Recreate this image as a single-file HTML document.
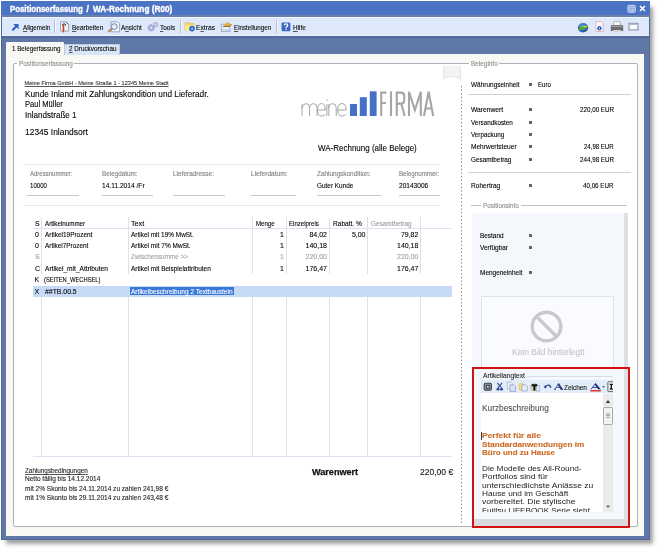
<!DOCTYPE html>
<html><head><meta charset="utf-8"><style>
html,body{margin:0;padding:0;background:#fff;width:658px;height:548px;overflow:hidden;position:relative;font-family:"Liberation Sans",sans-serif;}
u{text-decoration:underline;text-decoration-thickness:0.6px;text-underline-offset:1px;text-decoration-color:#555;}
</style></head><body>
<div style="position:absolute;left:1px;top:1px;width:649px;height:539px;background:#6078a8;box-shadow:4px 5px 4px -1px rgba(30,30,30,0.42);"></div><div style="position:absolute;left:1px;top:1px;width:649px;height:539px;box-sizing:border-box;border:1px solid #506896;"></div><div style="position:absolute;left:1px;top:1px;width:649px;height:15px;background:#4b73c4;"></div><div style="position:absolute;left:1px;top:15px;width:649px;height:2px;background:#6a80ae;"></div><div style="position:absolute;left:2px;top:17px;width:647px;height:19px;background:#dde9fa;border-top:1px solid #f0f6fe;border-bottom:1px solid #eef4fc;box-sizing:border-box;"></div><div style="position:absolute;left:2px;top:36px;width:647px;height:2px;background:#526a99;"></div><div style="position:absolute;left:6px;top:54px;width:638px;height:482px;background:#f9f8f4;"></div><div style="position:absolute;left:6px;top:42px;width:58px;height:13px;background:#f9f8f4;border-radius:1px 1px 0 0;"></div><div style="position:absolute;left:64px;top:44px;width:56px;height:11px;background:#d8e5f7;border:1px solid #b8c8e0;border-bottom:none;box-sizing:border-box;"></div><div style="position:absolute;left:13px;top:63px;width:625px;height:464px;background:#fff;box-sizing:border-box;border:1px solid #a9b1bb;border-radius:2px;"></div><div style="position:absolute;left:17px;top:63px;width:57px;height:2px;background:#fff;"></div><div style="position:absolute;left:469px;top:63px;width:30px;height:2px;background:#fff;"></div><svg style="position:absolute;left:460.5px;top:85px" width="2" height="442"><g fill="#808080"><rect x="0" y="1.0" width="1" height="1.3"/><rect x="0" y="4.6" width="1" height="1.3"/><rect x="0" y="8.2" width="1" height="1.3"/><rect x="0" y="11.8" width="1" height="1.3"/><rect x="0" y="15.4" width="1" height="1.3"/><rect x="0" y="19.0" width="1" height="1.3"/><rect x="0" y="22.6" width="1" height="1.3"/><rect x="0" y="26.2" width="1" height="1.3"/><rect x="0" y="29.8" width="1" height="1.3"/><rect x="0" y="33.4" width="1" height="1.3"/><rect x="0" y="37.0" width="1" height="1.3"/><rect x="0" y="40.6" width="1" height="1.3"/><rect x="0" y="44.2" width="1" height="1.3"/><rect x="0" y="47.8" width="1" height="1.3"/><rect x="0" y="51.4" width="1" height="1.3"/><rect x="0" y="55.0" width="1" height="1.3"/><rect x="0" y="58.6" width="1" height="1.3"/><rect x="0" y="62.2" width="1" height="1.3"/><rect x="0" y="65.8" width="1" height="1.3"/><rect x="0" y="69.4" width="1" height="1.3"/><rect x="0" y="73.0" width="1" height="1.3"/><rect x="0" y="76.6" width="1" height="1.3"/><rect x="0" y="80.2" width="1" height="1.3"/><rect x="0" y="83.8" width="1" height="1.3"/><rect x="0" y="87.4" width="1" height="1.3"/><rect x="0" y="91.0" width="1" height="1.3"/><rect x="0" y="94.6" width="1" height="1.3"/><rect x="0" y="98.2" width="1" height="1.3"/><rect x="0" y="101.8" width="1" height="1.3"/><rect x="0" y="105.4" width="1" height="1.3"/><rect x="0" y="109.0" width="1" height="1.3"/><rect x="0" y="112.6" width="1" height="1.3"/><rect x="0" y="116.2" width="1" height="1.3"/><rect x="0" y="119.8" width="1" height="1.3"/><rect x="0" y="123.4" width="1" height="1.3"/><rect x="0" y="127.0" width="1" height="1.3"/><rect x="0" y="130.6" width="1" height="1.3"/><rect x="0" y="134.2" width="1" height="1.3"/><rect x="0" y="137.8" width="1" height="1.3"/><rect x="0" y="141.4" width="1" height="1.3"/><rect x="0" y="145.0" width="1" height="1.3"/><rect x="0" y="148.6" width="1" height="1.3"/><rect x="0" y="152.2" width="1" height="1.3"/><rect x="0" y="155.8" width="1" height="1.3"/><rect x="0" y="159.4" width="1" height="1.3"/><rect x="0" y="163.0" width="1" height="1.3"/><rect x="0" y="166.6" width="1" height="1.3"/><rect x="0" y="170.2" width="1" height="1.3"/><rect x="0" y="173.8" width="1" height="1.3"/><rect x="0" y="177.4" width="1" height="1.3"/><rect x="0" y="181.0" width="1" height="1.3"/><rect x="0" y="184.6" width="1" height="1.3"/><rect x="0" y="188.2" width="1" height="1.3"/><rect x="0" y="191.8" width="1" height="1.3"/><rect x="0" y="195.4" width="1" height="1.3"/><rect x="0" y="199.0" width="1" height="1.3"/><rect x="0" y="202.6" width="1" height="1.3"/><rect x="0" y="206.2" width="1" height="1.3"/><rect x="0" y="209.8" width="1" height="1.3"/><rect x="0" y="213.4" width="1" height="1.3"/><rect x="0" y="217.0" width="1" height="1.3"/><rect x="0" y="220.6" width="1" height="1.3"/><rect x="0" y="224.2" width="1" height="1.3"/><rect x="0" y="227.8" width="1" height="1.3"/><rect x="0" y="231.4" width="1" height="1.3"/><rect x="0" y="235.0" width="1" height="1.3"/><rect x="0" y="238.6" width="1" height="1.3"/><rect x="0" y="242.2" width="1" height="1.3"/><rect x="0" y="245.8" width="1" height="1.3"/><rect x="0" y="249.4" width="1" height="1.3"/><rect x="0" y="253.0" width="1" height="1.3"/><rect x="0" y="256.6" width="1" height="1.3"/><rect x="0" y="260.2" width="1" height="1.3"/><rect x="0" y="263.8" width="1" height="1.3"/><rect x="0" y="267.4" width="1" height="1.3"/><rect x="0" y="271.0" width="1" height="1.3"/><rect x="0" y="274.6" width="1" height="1.3"/><rect x="0" y="278.2" width="1" height="1.3"/><rect x="0" y="281.8" width="1" height="1.3"/><rect x="0" y="285.4" width="1" height="1.3"/><rect x="0" y="289.0" width="1" height="1.3"/><rect x="0" y="292.6" width="1" height="1.3"/><rect x="0" y="296.2" width="1" height="1.3"/><rect x="0" y="299.8" width="1" height="1.3"/><rect x="0" y="303.4" width="1" height="1.3"/><rect x="0" y="307.0" width="1" height="1.3"/><rect x="0" y="310.6" width="1" height="1.3"/><rect x="0" y="314.2" width="1" height="1.3"/><rect x="0" y="317.8" width="1" height="1.3"/><rect x="0" y="321.4" width="1" height="1.3"/><rect x="0" y="325.0" width="1" height="1.3"/><rect x="0" y="328.6" width="1" height="1.3"/><rect x="0" y="332.2" width="1" height="1.3"/><rect x="0" y="335.8" width="1" height="1.3"/><rect x="0" y="339.4" width="1" height="1.3"/><rect x="0" y="343.0" width="1" height="1.3"/><rect x="0" y="346.6" width="1" height="1.3"/><rect x="0" y="350.2" width="1" height="1.3"/><rect x="0" y="353.8" width="1" height="1.3"/><rect x="0" y="357.4" width="1" height="1.3"/><rect x="0" y="361.0" width="1" height="1.3"/><rect x="0" y="364.6" width="1" height="1.3"/><rect x="0" y="368.2" width="1" height="1.3"/><rect x="0" y="371.8" width="1" height="1.3"/><rect x="0" y="375.4" width="1" height="1.3"/><rect x="0" y="379.0" width="1" height="1.3"/><rect x="0" y="382.6" width="1" height="1.3"/><rect x="0" y="386.2" width="1" height="1.3"/><rect x="0" y="389.8" width="1" height="1.3"/><rect x="0" y="393.4" width="1" height="1.3"/><rect x="0" y="397.0" width="1" height="1.3"/><rect x="0" y="400.6" width="1" height="1.3"/><rect x="0" y="404.2" width="1" height="1.3"/><rect x="0" y="407.8" width="1" height="1.3"/><rect x="0" y="411.4" width="1" height="1.3"/><rect x="0" y="415.0" width="1" height="1.3"/><rect x="0" y="418.6" width="1" height="1.3"/><rect x="0" y="422.2" width="1" height="1.3"/><rect x="0" y="425.8" width="1" height="1.3"/><rect x="0" y="429.4" width="1" height="1.3"/><rect x="0" y="433.0" width="1" height="1.3"/><rect x="0" y="436.6" width="1" height="1.3"/></g></svg><div style="position:absolute;left:23px;top:164px;width:417px;height:1px;background:#e6e6e6;"></div><div style="position:absolute;left:23px;top:205px;width:417px;height:1px;background:#e6e6e6;"></div><div style="position:absolute;left:27px;top:195px;width:52px;height:1px;background:#c8c8c8;"></div><div style="position:absolute;left:102px;top:195px;width:51px;height:1px;background:#c8c8c8;"></div><div style="position:absolute;left:173px;top:195px;width:52px;height:1px;background:#c8c8c8;"></div><div style="position:absolute;left:251px;top:195px;width:45px;height:1px;background:#c8c8c8;"></div><div style="position:absolute;left:317px;top:195px;width:64px;height:1px;background:#c8c8c8;"></div><div style="position:absolute;left:399px;top:195px;width:41px;height:1px;background:#c8c8c8;"></div><div style="position:absolute;left:33px;top:228px;width:419px;height:1px;background:#dae1f1;"></div><div style="position:absolute;left:33px;top:456px;width:419px;height:1px;background:#dae1f1;"></div><div style="position:absolute;left:41px;top:217px;width:1px;height:57px;background:#dae1f1;"></div><div style="position:absolute;left:41px;top:297px;width:1px;height:160px;background:#dae1f1;"></div><div style="position:absolute;left:128px;top:217px;width:1px;height:57px;background:#dae1f1;"></div><div style="position:absolute;left:128px;top:297px;width:1px;height:160px;background:#dae1f1;"></div><div style="position:absolute;left:252px;top:217px;width:1px;height:57px;background:#dae1f1;"></div><div style="position:absolute;left:252px;top:297px;width:1px;height:160px;background:#dae1f1;"></div><div style="position:absolute;left:286px;top:217px;width:1px;height:57px;background:#dae1f1;"></div><div style="position:absolute;left:286px;top:297px;width:1px;height:160px;background:#dae1f1;"></div><div style="position:absolute;left:329px;top:217px;width:1px;height:57px;background:#dae1f1;"></div><div style="position:absolute;left:329px;top:297px;width:1px;height:160px;background:#dae1f1;"></div><div style="position:absolute;left:367px;top:217px;width:1px;height:57px;background:#dae1f1;"></div><div style="position:absolute;left:367px;top:297px;width:1px;height:160px;background:#dae1f1;"></div><div style="position:absolute;left:420px;top:217px;width:1px;height:57px;background:#dae1f1;"></div><div style="position:absolute;left:420px;top:297px;width:1px;height:160px;background:#dae1f1;"></div><div style="position:absolute;left:33px;top:286px;width:419px;height:11px;background:#c6d9f6;"></div><div style="position:absolute;left:130px;top:287px;width:104px;height:8px;background:#3a78d8;"></div><div style="position:absolute;left:468px;top:94px;width:163px;height:1px;background:#d0d0d0;"></div><div style="position:absolute;left:468px;top:172px;width:163px;height:1px;background:#d0d0d0;"></div><div style="position:absolute;left:471px;top:205px;width:156px;height:1px;background:#c0c0c0;"></div><div style="position:absolute;left:481px;top:203px;width:40px;height:4px;background:#fff;"></div><div style="position:absolute;left:472px;top:213px;width:155px;height:313px;background:#f4f7fc;"></div><div style="position:absolute;left:624px;top:213px;width:4px;height:313px;background:#dcdfe3;"></div><div style="position:absolute;left:472px;top:519px;width:156px;height:7px;background:#d8dadd;"></div><div style="position:absolute;left:481px;top:296px;width:133px;height:72px;background:#fafbfe;border:1px solid #dce4f0;border-bottom:none;box-sizing:border-box;"></div><svg style="position:absolute;left:528px;top:308px" width="38" height="38"><circle cx="18.5" cy="18.5" r="14.3" fill="none" stroke="#c9c9c9" stroke-width="3.4"/><line x1="8.5" y1="8.5" x2="28.5" y2="28.5" stroke="#c9c9c9" stroke-width="3.4"/></svg><div style="position:absolute;left:472px;top:367px;width:158px;height:161px;box-sizing:border-box;border:2px solid #d31212;"></div><div style="position:absolute;left:474px;top:369px;width:150px;height:150px;background:#f4f7fc;"></div><div style="position:absolute;left:526px;top:376px;width:87px;height:1px;background:#d6dce8;"></div><div style="position:absolute;left:481px;top:380px;width:132px;height:13px;background:#e3ecf9;"></div><div style="position:absolute;left:481px;top:378px;width:1px;height:134px;background:#dde3ee;"></div><div style="position:absolute;left:481px;top:393px;width:122px;height:119px;background:#fff;"></div><div style="position:absolute;left:481px;top:432px;width:1px;height:8px;background:#3a3a3a;"></div><div style="position:absolute;left:603px;top:394px;width:10px;height:118px;background:#ebebeb;"></div><div style="position:absolute;left:603px;top:407px;width:10px;height:18px;background:#f2f2f2;border:1px solid #a8a8a8;box-sizing:border-box;border-radius:1.5px;"></div><svg style="position:absolute;left:603px;top:396px" width="10" height="116"><path d="M2.8 7 L5 4 L7.2 7 Z" fill="#333"/><path d="M3 109.8 L5 111.8 L7 109.8 Z" fill="#444"/><g fill="#8a8a8a"><rect x="3" y="17.5" width="4" height="0.8"/><rect x="3" y="19.2" width="4" height="0.8"/><rect x="3" y="20.9" width="4" height="0.8"/></g></svg><div style="position:absolute;left:529px;top:83px;width:3px;height:3px;background:#666;"></div><div style="position:absolute;left:529px;top:108px;width:3px;height:3px;background:#666;"></div><div style="position:absolute;left:529px;top:121px;width:3px;height:3px;background:#666;"></div><div style="position:absolute;left:529px;top:133px;width:3px;height:3px;background:#666;"></div><div style="position:absolute;left:529px;top:145px;width:3px;height:3px;background:#666;"></div><div style="position:absolute;left:529px;top:158px;width:3px;height:3px;background:#666;"></div><div style="position:absolute;left:529px;top:184px;width:3px;height:3px;background:#666;"></div><div style="position:absolute;left:529px;top:234px;width:3px;height:3px;background:#666;"></div><div style="position:absolute;left:529px;top:246px;width:3px;height:3px;background:#666;"></div><div style="position:absolute;left:529px;top:271px;width:3px;height:3px;background:#666;"></div>
<!-- toolbar separators -->
<div style="position:absolute;left:54px;top:20px;width:1px;height:13px;background:#b5bfcd;"></div>
<div style="position:absolute;left:55px;top:20px;width:1px;height:13px;background:#f4f8fd;"></div>
<div style="position:absolute;left:180px;top:20px;width:1px;height:13px;background:#b5bfcd;"></div>
<div style="position:absolute;left:181px;top:20px;width:1px;height:13px;background:#f4f8fd;"></div>
<div style="position:absolute;left:276px;top:20px;width:1px;height:13px;background:#b5bfcd;"></div>
<div style="position:absolute;left:277px;top:20px;width:1px;height:13px;background:#f4f8fd;"></div>
<!-- Allgemein arrow -->
<svg style="position:absolute;left:10px;top:22px" width="10" height="10"><path d="M2.4 8.3 L7.4 3.2" stroke="#3560c0" stroke-width="2.1" fill="none"/><path d="M3.2 1.9 L8.6 1.9 L8.6 7.3 Z" fill="#3560c0"/></svg>
<!-- Bearbeiten icon -->
<svg style="position:absolute;left:59px;top:21px" width="11" height="12"><path d="M1.5 0.9 H7 L9.6 3.5 V10 H1.5 Z" fill="#f4f8fd" stroke="#8e9cb6" stroke-width="0.9"/><path d="M7 0.9 L9.6 3.5" stroke="#5c6a86" stroke-width="1"/><path d="M4.4 10.6 V4.6" stroke="#c4461e" stroke-width="1.7" stroke-linecap="round"/><path d="M3.2 4.2 Q4.2 2.6 5.8 3 Q6.8 3.3 6.6 4.8" fill="none" stroke="#3c4452" stroke-width="1.1"/></svg>
<!-- Ansicht icon -->
<svg style="position:absolute;left:107px;top:21px" width="14" height="12"><path d="M4 0.8 H10.5 L12.6 2.9 V10.8 H4 Z" fill="#f4f7fc" stroke="#8c9dc0" stroke-width="0.9"/><circle cx="7.3" cy="5.6" r="2.9" fill="#e8f0fb" stroke="#6a7ea8" stroke-width="1"/><path d="M5.2 7.8 L1.2 10.8" stroke="#a8844a" stroke-width="1.8"/></svg>
<!-- Tools gears -->
<svg style="position:absolute;left:147px;top:21px" width="12" height="11"><g fill="#a6a6d4"><polygon points="8.10,6.80 8.03,7.56 6.88,7.91 6.61,8.41 6.96,9.56 6.37,10.04 5.31,9.48 4.77,9.64 4.20,10.70 3.44,10.63 3.09,9.48 2.59,9.21 1.44,9.56 0.96,8.97 1.52,7.91 1.36,7.37 0.30,6.80 0.37,6.04 1.52,5.69 1.79,5.19 1.44,4.04 2.03,3.56 3.09,4.12 3.63,3.96 4.20,2.90 4.96,2.97 5.31,4.12 5.81,4.39 6.96,4.04 7.44,4.63 6.88,5.69 7.04,6.23"/><circle cx="4.2" cy="6.8" r="1.2" fill="#e6ecf8"/></g><g fill="#b4b4dc"><polygon points="11.70,3.60 11.62,4.29 10.67,4.60 10.40,5.03 10.53,6.02 9.95,6.39 9.11,5.84 8.60,5.90 7.91,6.62 7.25,6.39 7.17,5.40 6.80,5.03 5.81,4.95 5.58,4.29 6.30,3.60 6.36,3.09 5.81,2.25 6.18,1.67 7.17,1.80 7.60,1.53 7.91,0.58 8.60,0.50 9.11,1.36 9.60,1.53 10.53,1.18 11.02,1.67 10.67,2.60 10.84,3.09"/><circle cx="8.6" cy="3.6" r="0.9" fill="#e6ecf8"/></g></svg>
<!-- Extras folder -->
<svg style="position:absolute;left:184px;top:21px" width="12" height="11"><path d="M0.8 3 L1.5 1.5 H4.5 L5.3 2.6 H10 V9 H0.8 Z" fill="#f2d86a" stroke="#d8b84a" stroke-width="0.6"/><path d="M0.8 4 H10.5 L9.5 9.2 H0.8 Z" fill="#fbe98f"/><circle cx="8" cy="7.6" r="2.6" fill="#2a6fd0" stroke="#1c52a8" stroke-width="0.5"/><rect x="7.6" y="6.6" width="0.9" height="2.2" fill="#fff"/></svg>
<!-- Einstellungen -->
<svg style="position:absolute;left:220px;top:21px" width="13" height="12"><rect x="1.4" y="3.2" width="8.4" height="7.4" fill="#eef3fa" stroke="#9aaac2" stroke-width="0.9"/><rect x="2" y="8" width="7.2" height="2" fill="#c8d6ea"/><path d="M3 5.4 L7.4 1 L11.6 3.6 L9.6 5.4 Z" fill="#e8b040"/><path d="M3 5.4 L9.6 5.4 L11.6 3.6" fill="none" stroke="#7a5418" stroke-width="0.9"/></svg>
<!-- Hilfe -->
<svg style="position:absolute;left:281px;top:22px" width="10" height="10"><rect x="0.6" y="0.4" width="8.8" height="8.8" rx="1.3" fill="#3d66c2"/><path d="M3.2 3.4 Q3.3 1.8 5 1.8 Q6.8 1.8 6.8 3.3 Q6.8 4.3 5.6 4.9 Q5 5.2 5 6" fill="none" stroke="#fff" stroke-width="1.2"/><rect x="4.4" y="6.7" width="1.2" height="1.3" fill="#fff"/></svg>
<!-- right toolbar: globe -->
<svg style="position:absolute;left:577px;top:22px" width="12" height="11"><defs><radialGradient id="gg" cx="0.4" cy="0.35" r="0.7"><stop offset="0" stop-color="#5aa0e0"/><stop offset="1" stop-color="#1a4e98"/></radialGradient></defs><ellipse cx="6" cy="5.7" rx="5.2" ry="4.7" fill="url(#gg)"/><path d="M1.2 7 Q3.5 3.4 10.9 3.9 Q10.6 6.2 7 7.6 Q3.6 8.8 1.2 7 Z" fill="#58a838"/><path d="M4.6 4.4 Q7.8 3.2 10.8 3.9 Q9.8 4.8 7.6 5.2" fill="#d8d040"/></svg>
<!-- doc -->
<svg style="position:absolute;left:595px;top:21px" width="9" height="11"><path d="M0.8 0.6 H6 L8.2 2.8 V10.4 H0.8 Z" fill="#fff" stroke="#e0a0b0" stroke-width="0.8"/><circle cx="4.4" cy="7.2" r="2.2" fill="#2a62b8"/><rect x="4" y="6.4" width="0.8" height="1.8" fill="#fff"/></svg>
<!-- printer -->
<svg style="position:absolute;left:610px;top:21px" width="14" height="12"><rect x="3.5" y="0.8" width="7" height="4" fill="#f4f4f4" stroke="#9a9a9a" stroke-width="0.6"/><path d="M0.8 5 Q0.8 4 2 4 H12 Q13.2 4 13.2 5 V10 H0.8 Z" fill="#6c6c6c"/><rect x="1.5" y="4.6" width="11" height="1.5" fill="#9a9a9a"/><rect x="3" y="9" width="8" height="2.2" fill="#d8d8d8"/></svg>
<!-- window icon -->
<svg style="position:absolute;left:628px;top:22px" width="11" height="9"><rect x="1" y="1.3" width="9" height="6.6" fill="#fafbfd" stroke="#788092" stroke-width="0.9"/><rect x="1.4" y="1.7" width="8.2" height="1.3" fill="#b4bccc"/></svg>
<!-- title bar restore -->
<svg style="position:absolute;left:627px;top:4px" width="10" height="10"><rect x="0.9" y="1.3" width="7.4" height="7" rx="1" fill="#8aa6de" stroke="#d6e2f8" stroke-width="0.9"/><rect x="2.9" y="3.2" width="3.4" height="3.2" fill="none" stroke="#f4f8ff" stroke-width="0.8" stroke-dasharray="1 0.7"/></svg>
<!-- title close -->
<svg style="position:absolute;left:639px;top:5px" width="7" height="7"><path d="M1 1 L6 6 M6 1 L1 6" stroke="#fff" stroke-width="1.5"/></svg>
<!-- logo -->
<svg style="position:absolute;left:0;top:0" width="658" height="548">
<g fill="none" stroke="#9c9c9c" stroke-width="0.9">
<path d="M302 116 V104 M302 108 Q303 103.6 306 103.6 Q309.5 103.6 309.5 107.5 V116 M309.5 107.5 Q310 103.6 313.4 103.6 Q317 103.6 317 107.5 V116"/>
<path d="M317.6 110 H325.4 Q325.4 103.6 321.5 103.6 Q317.5 103.6 317.5 109.8 Q317.5 116.1 321.6 116.1 Q324.2 116.1 325.2 114"/>
<path d="M326.9 104 V116"/>
<path d="M328.8 104 V116 M328.8 108 Q329.5 103.6 332.5 103.6 Q336.2 103.6 336.2 107.5 V116"/>
<path d="M337.8 110 H346.2 Q346.2 103.6 342 103.6 Q337.7 103.6 337.7 109.8 Q337.7 116.1 342.1 116.1 Q344.8 116.1 345.9 114"/>
</g>
<circle cx="326.9" cy="100" r="0.7" fill="#9c9c9c"/>
<rect x="350" y="104" width="7" height="12" fill="#4570c8"/>
<rect x="359.8" y="97.2" width="7" height="18.8" fill="#4570c8"/>
<rect x="369.8" y="91.3" width="6.8" height="24.7" fill="#4570c8"/>
<g fill="none" stroke="#a6a6a6" stroke-width="2.1">
<path d="M381.2 116 V92.6 H386.4 M381.2 103 H386"/>
<path d="M391 91.5 V116"/>
<path d="M396.8 116 V92.6 H401 Q404.2 92.6 404.2 96 V100.4 Q404.2 103.6 401 103.6 H396.8 M401.3 103.6 L404.6 116"/>
<path d="M409 116 V91.8 L414.9 110 L420.8 91.8 V116"/>
<path d="M424 116 L428.6 91.8 L433.2 116 M425.5 108.5 H431.8"/>
</g>
</svg>
<!-- page curl -->
<svg style="position:absolute;left:441px;top:64px" width="22" height="18"><path d="M2.5 1.5 H19.5 V15.5 Q11 9.5 2.5 14.5 Z" fill="#f3f3f3"/><path d="M2.5 1.5 V14.5 Q11 9.5 19.5 15.5 V1.5" fill="none" stroke="#e4e4e4" stroke-width="1"/></svg>
<!-- editor toolbar icons -->
<svg style="position:absolute;left:481px;top:379px" width="132" height="16">
<rect x="3.2" y="4.3" width="7.2" height="6.8" rx="1.2" fill="#9a9ea6" stroke="#3c4048" stroke-width="1.1"/><rect x="5.3" y="6.2" width="3" height="3" fill="#d0d2d6" stroke="#2a2c30" stroke-width="0.9"/>
<path d="M16.4 4 L20.6 9.2 M21 4 L16.8 9.2" stroke="#3a5fa8" stroke-width="1.3" fill="none"/><ellipse cx="17" cy="10.3" rx="1.5" ry="1.2" fill="#23478f"/><ellipse cx="20.6" cy="10.3" rx="1.5" ry="1.2" fill="#23478f"/>
<path d="M26.4 3.2 H30 L31.8 5 V10 H26.4 Z" fill="#eef2fa" stroke="#a6b2c8" stroke-width="0.8"/><path d="M29 5.8 H32.6 L34.6 7.8 V12.4 H29 Z" fill="#dbe4f4" stroke="#8ea0c4" stroke-width="0.8"/>
<rect x="38.2" y="4.6" width="4.6" height="6.6" rx="0.8" fill="#f0dc78" stroke="#d6c060" stroke-width="0.6"/><path d="M41 5.8 H44.6 L46.4 7.6 V12 H41 Z" fill="#e6edf8" stroke="#9aaac6" stroke-width="0.8"/>
<circle cx="53.2" cy="8.2" r="3.8" fill="#d8d4b8" stroke="#a8a488" stroke-width="0.5"/><path d="M55.5 6.5 H58.4 L58.4 12.2 H55.5 Z" fill="#e4eaf6" stroke="#9aa8c4" stroke-width="0.7"/><path d="M50.6 5.2 H56.2 V7.3 H54.4 V11.6 H52.4 V7.3 H50.6 Z" fill="#0c0c0c"/>
<path d="M64 8.6 Q65 5.9 67.4 6.1 Q69.8 6.4 69.6 8.9" fill="none" stroke="#2c4ea0" stroke-width="1.3"/><path d="M62.6 6.6 L64.2 9.8 L66.2 7.4 Z" fill="#2c4ea0"/>
<path d="M73.8 10.3 L77.7 4.4 L81.4 10.3" fill="none" stroke="#22307c" stroke-width="0.8"/><path d="M77.6 4.4 L81.6 10.3 H79.6 L76.8 5.8 Z" fill="#22307c"/><path d="M75.6 8.4 H79.8" stroke="#22307c" stroke-width="0.8"/><path d="M73.2 10.3 H75 M79.4 10.3 H82" stroke="#22307c" stroke-width="0.9"/>
<path d="M110 10.3 L114.6 4.4 L119.2 10.3" fill="none" stroke="#1c2a80" stroke-width="0.9"/><path d="M114.5 4.4 L119.4 10.3 H117.2 L113.8 5.8 Z" fill="#1c2a80"/><path d="M112 8.5 H117" stroke="#1c2a80" stroke-width="0.8"/><rect x="109.4" y="11" width="10.4" height="1.5" fill="#e23030"/>
<path d="M121.1 7.3 H123.9 L122.5 8.8 Z" fill="#333"/>
<rect x="126.9" y="2.8" width="7" height="9.8" rx="0.6" fill="#f4f4f4" stroke="#50545a" stroke-width="0.9"/><path d="M128.8 4.8 H131.8 V6 H131 V9.6 H131.8 V10.8 H128.8 V9.6 H129.6 V6 H128.8 Z" fill="#111"/>
</svg>

<div style="position:absolute;left:481px;top:393px;width:122px;height:119px;overflow:hidden;will-change:transform">
<div style="position:absolute;left:0.60px;top:72px;font-size:7.4px;line-height:7.4px;color:#222;font-weight:normal;white-space:pre;transform:scaleX(1.111);transform-origin:0 0;">Die Modelle des All-Round-</div><div style="position:absolute;left:0.60px;top:80px;font-size:7.4px;line-height:7.4px;color:#222;font-weight:normal;white-space:pre;transform:scaleX(1.154);transform-origin:0 0;">Portfolios sind für</div><div style="position:absolute;left:0.60px;top:89px;font-size:7.4px;line-height:7.4px;color:#222;font-weight:normal;white-space:pre;transform:scaleX(1.148);transform-origin:0 0;">unterschiedlichste Anlässe zu</div><div style="position:absolute;left:0.60px;top:97px;font-size:7.4px;line-height:7.4px;color:#222;font-weight:normal;white-space:pre;transform:scaleX(1.117);transform-origin:0 0;">Hause und im Geschäft</div><div style="position:absolute;left:0.60px;top:105px;font-size:7.4px;line-height:7.4px;color:#222;font-weight:normal;white-space:pre;transform:scaleX(1.161);transform-origin:0 0;">vorbereitet. Die stylische</div><div style="position:absolute;left:0.60px;top:114px;font-size:7.4px;line-height:7.4px;color:#222;font-weight:normal;white-space:pre;transform:scaleX(1.104);transform-origin:0 0;">Fujitsu LIFEBOOK Serie sieht</div>
</div>
<div style="position:absolute;left:0;top:0;width:658px;height:548px;will-change:transform;-webkit-text-stroke:0.1px currentColor">
<div style="position:absolute;left:10.00px;top:5px;font-size:8.6px;line-height:8.6px;color:#fff;font-weight:bold;white-space:pre;transform:scaleX(0.912);transform-origin:0 0;-webkit-text-stroke:0.35px #fff;">Positionserfassung</div><div style="position:absolute;left:86.40px;top:5px;font-size:8.6px;line-height:8.6px;color:#fff;font-weight:bold;white-space:pre;-webkit-text-stroke:0.35px #fff;">/</div><div style="position:absolute;left:93.40px;top:5px;font-size:8.6px;line-height:8.6px;color:#fff;font-weight:bold;white-space:pre;transform:scaleX(0.961);transform-origin:0 0;-webkit-text-stroke:0.35px #fff;">WA-Rechnung (R00)</div><div style="position:absolute;left:22.50px;top:24px;font-size:7.2px;line-height:7.2px;color:#000;font-weight:normal;white-space:pre;transform:scaleX(0.863);transform-origin:0 0;"><u>A</u>llgemein</div><div style="position:absolute;left:71.70px;top:24px;font-size:7.2px;line-height:7.2px;color:#000;font-weight:normal;white-space:pre;transform:scaleX(0.899);transform-origin:0 0;"><u>B</u>earbeiten</div><div style="position:absolute;left:121.10px;top:24px;font-size:7.2px;line-height:7.2px;color:#000;font-weight:normal;white-space:pre;transform:scaleX(0.881);transform-origin:0 0;">A<u>n</u>sicht</div><div style="position:absolute;left:159.70px;top:24px;font-size:7.2px;line-height:7.2px;color:#000;font-weight:normal;white-space:pre;transform:scaleX(0.904);transform-origin:0 0;"><u>T</u>ools</div><div style="position:absolute;left:196.30px;top:24px;font-size:7.2px;line-height:7.2px;color:#000;font-weight:normal;white-space:pre;transform:scaleX(0.936);transform-origin:0 0;">E<u>x</u>tras</div><div style="position:absolute;left:233.50px;top:24px;font-size:7.2px;line-height:7.2px;color:#000;font-weight:normal;white-space:pre;transform:scaleX(0.860);transform-origin:0 0;"><u>E</u>instellungen</div><div style="position:absolute;left:293.10px;top:24px;font-size:7.2px;line-height:7.2px;color:#000;font-weight:normal;white-space:pre;transform:scaleX(0.889);transform-origin:0 0;"><u>H</u>ilfe</div><div style="position:absolute;left:11.80px;top:45px;font-size:7.2px;line-height:7.2px;color:#000;font-weight:normal;white-space:pre;transform:scaleX(0.867);transform-origin:0 0;">1 Belegerfassung</div><div style="position:absolute;left:68.80px;top:45px;font-size:7.2px;line-height:7.2px;color:#000;font-weight:normal;white-space:pre;transform:scaleX(0.879);transform-origin:0 0;"><u>2</u> Druckvorschau</div><div style="position:absolute;left:18.80px;top:60px;font-size:7.0px;line-height:7.0px;color:#8c8c8c;font-weight:normal;white-space:pre;transform:scaleX(0.911);transform-origin:0 0;">Positionserfassung</div><div style="position:absolute;left:470.80px;top:60px;font-size:7.0px;line-height:7.0px;color:#8c8c8c;font-weight:normal;white-space:pre;transform:scaleX(0.915);transform-origin:0 0;">Beleginfo</div><div style="position:absolute;left:483.00px;top:202px;font-size:7.0px;line-height:7.0px;color:#8c8c8c;font-weight:normal;white-space:pre;transform:scaleX(0.902);transform-origin:0 0;">Positionsinfo</div><div style="position:absolute;left:24.60px;top:81px;font-size:5.6px;line-height:5.6px;color:#333;font-weight:normal;white-space:pre;"><u>Meine Firma GmbH - Meine Straße 1 - 12345 Meine Stadt</u></div><div style="position:absolute;left:24.60px;top:89px;font-size:9.6px;line-height:9.6px;color:#000;font-weight:normal;white-space:pre;transform:scaleX(0.859);transform-origin:0 0;">Kunde Inland mit Zahlungskondition und Lieferadr.</div><div style="position:absolute;left:24.60px;top:99px;font-size:9.6px;line-height:9.6px;color:#000;font-weight:normal;white-space:pre;transform:scaleX(0.789);transform-origin:0 0;">Paul Müller</div><div style="position:absolute;left:24.60px;top:110px;font-size:9.6px;line-height:9.6px;color:#000;font-weight:normal;white-space:pre;transform:scaleX(0.841);transform-origin:0 0;">Inlandstraße 1</div><div style="position:absolute;left:24.60px;top:127px;font-size:9.6px;line-height:9.6px;color:#000;font-weight:normal;white-space:pre;transform:scaleX(0.879);transform-origin:0 0;">12345 Inlandsort</div><div style="position:absolute;left:317.80px;top:144px;font-size:8.6px;line-height:8.6px;color:#000;font-weight:normal;white-space:pre;transform:scaleX(0.930);transform-origin:0 0;">WA-Rechnung (alle Belege)</div><div style="position:absolute;left:29.60px;top:170px;font-size:7.0px;line-height:7.0px;color:#7c7c7c;font-weight:normal;white-space:pre;transform:scaleX(0.860);transform-origin:0 0;">Adressnummer:</div><div style="position:absolute;left:101.90px;top:170px;font-size:7.0px;line-height:7.0px;color:#7c7c7c;font-weight:normal;white-space:pre;transform:scaleX(0.903);transform-origin:0 0;">Belegdatum:</div><div style="position:absolute;left:173.00px;top:170px;font-size:7.0px;line-height:7.0px;color:#7c7c7c;font-weight:normal;white-space:pre;transform:scaleX(0.924);transform-origin:0 0;">Lieferadresse:</div><div style="position:absolute;left:251.00px;top:170px;font-size:7.0px;line-height:7.0px;color:#7c7c7c;font-weight:normal;white-space:pre;transform:scaleX(0.938);transform-origin:0 0;">Lieferdatum:</div><div style="position:absolute;left:316.60px;top:170px;font-size:7.0px;line-height:7.0px;color:#7c7c7c;font-weight:normal;white-space:pre;transform:scaleX(0.914);transform-origin:0 0;">Zahlungskondition:</div><div style="position:absolute;left:398.70px;top:170px;font-size:7.0px;line-height:7.0px;color:#7c7c7c;font-weight:normal;white-space:pre;transform:scaleX(0.881);transform-origin:0 0;">Belegnummer:</div><div style="position:absolute;left:29.60px;top:182px;font-size:7.0px;line-height:7.0px;color:#000;font-weight:normal;white-space:pre;transform:scaleX(0.873);transform-origin:0 0;">10000</div><div style="position:absolute;left:101.90px;top:182px;font-size:7.0px;line-height:7.0px;color:#000;font-weight:normal;white-space:pre;transform:scaleX(0.946);transform-origin:0 0;">14.11.2014 /Fr</div><div style="position:absolute;left:316.60px;top:182px;font-size:7.0px;line-height:7.0px;color:#000;font-weight:normal;white-space:pre;transform:scaleX(0.917);transform-origin:0 0;">Guter Kunde</div><div style="position:absolute;left:398.70px;top:182px;font-size:7.0px;line-height:7.0px;color:#000;font-weight:normal;white-space:pre;transform:scaleX(0.938);transform-origin:0 0;">20143006</div><div style="position:absolute;left:35.00px;top:220px;font-size:7.0px;line-height:7.0px;color:#000;font-weight:normal;white-space:pre;">S</div><div style="position:absolute;left:44.60px;top:220px;font-size:7.0px;line-height:7.0px;color:#000;font-weight:normal;white-space:pre;transform:scaleX(0.889);transform-origin:0 0;">Artikelnummer</div><div style="position:absolute;left:131.40px;top:220px;font-size:7.0px;line-height:7.0px;color:#000;font-weight:normal;white-space:pre;transform:scaleX(1.028);transform-origin:0 0;">Text</div><div style="position:absolute;left:256.00px;top:220px;font-size:7.0px;line-height:7.0px;color:#000;font-weight:normal;white-space:pre;transform:scaleX(0.869);transform-origin:0 0;">Menge</div><div style="position:absolute;left:289.40px;top:220px;font-size:7.0px;line-height:7.0px;color:#000;font-weight:normal;white-space:pre;transform:scaleX(0.870);transform-origin:0 0;">Einzelpreis</div><div style="position:absolute;left:332.70px;top:220px;font-size:7.0px;line-height:7.0px;color:#000;font-weight:normal;white-space:pre;transform:scaleX(0.937);transform-origin:0 0;">Rabatt. %</div><div style="position:absolute;left:371.00px;top:220px;font-size:7.0px;line-height:7.0px;color:#999;font-weight:normal;white-space:pre;transform:scaleX(0.915);transform-origin:0 0;">Gesamtbetrag</div><div style="position:absolute;left:35.00px;top:231px;font-size:7.0px;line-height:7.0px;color:#000;font-weight:normal;white-space:pre;">0</div><div style="position:absolute;left:44.60px;top:231px;font-size:7.0px;line-height:7.0px;color:#000;font-weight:normal;white-space:pre;transform:scaleX(0.923);transform-origin:0 0;">Artikel19Prozent</div><div style="position:absolute;left:131.40px;top:231px;font-size:7.0px;line-height:7.0px;color:#000;font-weight:normal;white-space:pre;transform:scaleX(0.921);transform-origin:0 0;">Artikel mit 19% MwSt.</div><div style="position:absolute;left:35.00px;top:242px;font-size:7.0px;line-height:7.0px;color:#000;font-weight:normal;white-space:pre;">0</div><div style="position:absolute;left:44.60px;top:242px;font-size:7.0px;line-height:7.0px;color:#000;font-weight:normal;white-space:pre;transform:scaleX(0.914);transform-origin:0 0;">Artikel7Prozent</div><div style="position:absolute;left:131.40px;top:242px;font-size:7.0px;line-height:7.0px;color:#000;font-weight:normal;white-space:pre;transform:scaleX(0.929);transform-origin:0 0;">Artikel mit 7% MwSt.</div><div style="position:absolute;left:35.00px;top:253px;font-size:7.0px;line-height:7.0px;color:#a0a0a0;font-weight:normal;white-space:pre;">S</div><div style="position:absolute;left:131.40px;top:253px;font-size:7.0px;line-height:7.0px;color:#a0a0a0;font-weight:normal;white-space:pre;transform:scaleX(0.910);transform-origin:0 0;">Zwischensumme &gt;&gt;</div><div style="position:absolute;left:35.00px;top:265px;font-size:7.0px;line-height:7.0px;color:#000;font-weight:normal;white-space:pre;">C</div><div style="position:absolute;left:44.60px;top:265px;font-size:7.0px;line-height:7.0px;color:#000;font-weight:normal;white-space:pre;transform:scaleX(0.945);transform-origin:0 0;">Artikel_mit_Attributen</div><div style="position:absolute;left:131.40px;top:265px;font-size:7.0px;line-height:7.0px;color:#000;font-weight:normal;white-space:pre;transform:scaleX(0.924);transform-origin:0 0;">Artikel mit Beispielattributen</div><div style="position:absolute;left:34.50px;top:276px;font-size:7.0px;line-height:7.0px;color:#000;font-weight:normal;white-space:pre;">K</div><div style="position:absolute;left:43.70px;top:276px;font-size:7.0px;line-height:7.0px;color:#000;font-weight:normal;white-space:pre;transform:scaleX(0.825);transform-origin:0 0;">(SEITEN_WECHSEL)</div><div style="position:absolute;left:34.50px;top:288px;font-size:7.0px;line-height:7.0px;color:#000;font-weight:normal;white-space:pre;">X</div><div style="position:absolute;left:45.20px;top:288px;font-size:7.0px;line-height:7.0px;color:#000;font-weight:normal;white-space:pre;transform:scaleX(0.981);transform-origin:0 0;">##TB.00.5</div><div style="position:absolute;left:131.40px;top:288px;font-size:7.0px;line-height:7.0px;color:#fff;font-weight:normal;white-space:pre;transform:scaleX(0.937);transform-origin:0 0;">Artikelbeschreibung 2 Textbaustein</div><div style="position:absolute;left:279.91px;top:231px;font-size:7.0px;line-height:7.0px;color:#000;font-weight:normal;white-space:pre;">1</div><div style="position:absolute;left:309.48px;top:231px;font-size:7.0px;line-height:7.0px;color:#000;font-weight:normal;white-space:pre;">84,02</div><div style="position:absolute;left:351.88px;top:231px;font-size:7.0px;line-height:7.0px;color:#000;font-weight:normal;white-space:pre;">5,00</div><div style="position:absolute;left:400.88px;top:231px;font-size:7.0px;line-height:7.0px;color:#000;font-weight:normal;white-space:pre;">79,82</div><div style="position:absolute;left:279.91px;top:242px;font-size:7.0px;line-height:7.0px;color:#000;font-weight:normal;white-space:pre;">1</div><div style="position:absolute;left:305.59px;top:242px;font-size:7.0px;line-height:7.0px;color:#000;font-weight:normal;white-space:pre;">140,18</div><div style="position:absolute;left:396.99px;top:242px;font-size:7.0px;line-height:7.0px;color:#000;font-weight:normal;white-space:pre;">140,18</div><div style="position:absolute;left:279.91px;top:253px;font-size:7.0px;line-height:7.0px;color:#a0a0a0;font-weight:normal;white-space:pre;">1</div><div style="position:absolute;left:305.59px;top:253px;font-size:7.0px;line-height:7.0px;color:#a0a0a0;font-weight:normal;white-space:pre;">220,00</div><div style="position:absolute;left:396.99px;top:253px;font-size:7.0px;line-height:7.0px;color:#a0a0a0;font-weight:normal;white-space:pre;">220,00</div><div style="position:absolute;left:279.91px;top:265px;font-size:7.0px;line-height:7.0px;color:#000;font-weight:normal;white-space:pre;">1</div><div style="position:absolute;left:305.59px;top:265px;font-size:7.0px;line-height:7.0px;color:#000;font-weight:normal;white-space:pre;">176,47</div><div style="position:absolute;left:396.99px;top:265px;font-size:7.0px;line-height:7.0px;color:#000;font-weight:normal;white-space:pre;">176,47</div><div style="position:absolute;left:24.90px;top:468px;font-size:6.8px;line-height:6.8px;color:#222;font-weight:normal;white-space:pre;transform:scaleX(0.932);transform-origin:0 0;"><u>Zahlungsbedingungen</u></div><div style="position:absolute;left:24.90px;top:476px;font-size:6.8px;line-height:6.8px;color:#222;font-weight:normal;white-space:pre;transform:scaleX(0.958);transform-origin:0 0;">Netto fällig bis 14.12.2014</div><div style="position:absolute;left:24.90px;top:486px;font-size:6.8px;line-height:6.8px;color:#222;font-weight:normal;white-space:pre;transform:scaleX(0.961);transform-origin:0 0;">mit 2% Skonto bis 24.11.2014 zu zahlen 241,98 €</div><div style="position:absolute;left:24.90px;top:495px;font-size:6.8px;line-height:6.8px;color:#222;font-weight:normal;white-space:pre;transform:scaleX(0.961);transform-origin:0 0;">mit 1% Skonto bis 29.11.2014 zu zahlen 243,48 €</div><div style="position:absolute;left:312.30px;top:468px;font-size:8.7px;line-height:8.7px;color:#111;font-weight:bold;white-space:pre;transform:scaleX(1.046);transform-origin:0 0;-webkit-text-stroke:0.25px #111;">Warenwert</div><div style="position:absolute;left:420.00px;top:468px;font-size:8.7px;line-height:8.7px;color:#111;font-weight:normal;white-space:pre;transform:scaleX(0.983);transform-origin:0 0;">220,00 €</div><div style="position:absolute;left:470.80px;top:82px;font-size:6.8px;line-height:6.8px;color:#000;font-weight:normal;white-space:pre;transform:scaleX(0.952);transform-origin:0 0;">Währungseinheit</div><div style="position:absolute;left:537.70px;top:82px;font-size:6.8px;line-height:6.8px;color:#000;font-weight:normal;white-space:pre;transform:scaleX(0.905);transform-origin:0 0;">Euro</div><div style="position:absolute;left:470.80px;top:107px;font-size:6.8px;line-height:6.8px;color:#000;font-weight:normal;white-space:pre;transform:scaleX(0.987);transform-origin:0 0;">Warenwert</div><div style="position:absolute;left:579.60px;top:107px;font-size:6.8px;line-height:6.8px;color:#000;font-weight:normal;white-space:pre;transform:scaleX(0.920);transform-origin:0 0;">220,00 EUR</div><div style="position:absolute;left:470.80px;top:120px;font-size:6.8px;line-height:6.8px;color:#000;font-weight:normal;white-space:pre;transform:scaleX(0.931);transform-origin:0 0;">Versandkosten</div><div style="position:absolute;left:470.80px;top:132px;font-size:6.8px;line-height:6.8px;color:#000;font-weight:normal;white-space:pre;transform:scaleX(0.924);transform-origin:0 0;">Verpackung</div><div style="position:absolute;left:470.80px;top:144px;font-size:6.8px;line-height:6.8px;color:#000;font-weight:normal;white-space:pre;transform:scaleX(0.965);transform-origin:0 0;">Mehrwertsteuer</div><div style="position:absolute;left:584.20px;top:144px;font-size:6.8px;line-height:6.8px;color:#000;font-weight:normal;white-space:pre;transform:scaleX(0.887);transform-origin:0 0;">24,98 EUR</div><div style="position:absolute;left:470.80px;top:157px;font-size:6.8px;line-height:6.8px;color:#000;font-weight:normal;white-space:pre;transform:scaleX(0.938);transform-origin:0 0;">Gesamtbetrag</div><div style="position:absolute;left:579.60px;top:157px;font-size:6.8px;line-height:6.8px;color:#000;font-weight:normal;white-space:pre;transform:scaleX(0.920);transform-origin:0 0;">244,98 EUR</div><div style="position:absolute;left:470.80px;top:183px;font-size:6.8px;line-height:6.8px;color:#000;font-weight:normal;white-space:pre;transform:scaleX(0.966);transform-origin:0 0;">Rohertrag</div><div style="position:absolute;left:583.30px;top:183px;font-size:6.8px;line-height:6.8px;color:#000;font-weight:normal;white-space:pre;transform:scaleX(0.914);transform-origin:0 0;">40,06 EUR</div><div style="position:absolute;left:480.00px;top:233px;font-size:6.8px;line-height:6.8px;color:#000;font-weight:normal;white-space:pre;transform:scaleX(0.946);transform-origin:0 0;">Bestand</div><div style="position:absolute;left:480.00px;top:245px;font-size:6.8px;line-height:6.8px;color:#000;font-weight:normal;white-space:pre;transform:scaleX(0.950);transform-origin:0 0;">Verfügbar</div><div style="position:absolute;left:480.00px;top:270px;font-size:6.8px;line-height:6.8px;color:#000;font-weight:normal;white-space:pre;transform:scaleX(0.950);transform-origin:0 0;">Mengeneinheit</div><div style="position:absolute;left:511.50px;top:348px;font-size:8.6px;line-height:8.6px;color:#c4c4c4;font-weight:normal;white-space:pre;transform:scaleX(0.985);transform-origin:0 0;">Kein Bild hinterlegt!</div><div style="position:absolute;left:482.80px;top:373px;font-size:6.8px;line-height:6.8px;color:#222;font-weight:normal;white-space:pre;transform:scaleX(0.981);transform-origin:0 0;">Artikellangtext</div><div style="position:absolute;left:564.30px;top:384px;font-size:7.0px;line-height:7.0px;color:#111;font-weight:normal;white-space:pre;transform:scaleX(0.920);transform-origin:0 0;">Zeichen</div><div style="position:absolute;left:482.20px;top:404px;font-size:8.5px;line-height:8.5px;color:#505050;font-weight:normal;white-space:pre;transform:scaleX(0.975);transform-origin:0 0;">Kurzbeschreibung</div><div style="position:absolute;left:482.00px;top:432px;font-size:7.6px;line-height:7.6px;color:#cc6a22;font-weight:bold;white-space:pre;transform:scaleX(1.117);transform-origin:0 0;">Perfekt für alle</div><div style="position:absolute;left:482.00px;top:441px;font-size:7.6px;line-height:7.6px;color:#cc6a22;font-weight:bold;white-space:pre;transform:scaleX(1.077);transform-origin:0 0;">Standardanwendungen im</div><div style="position:absolute;left:482.00px;top:449px;font-size:7.6px;line-height:7.6px;color:#cc6a22;font-weight:bold;white-space:pre;transform:scaleX(1.054);transform-origin:0 0;">Büro und zu Hause</div>
</div>
</body></html>
